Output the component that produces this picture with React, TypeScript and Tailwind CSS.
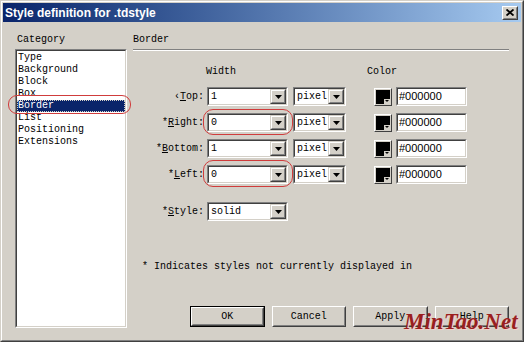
import React from 'react';

const mono = "font-['Liberation_Mono','Courier_New',monospace] text-[10px] leading-[12px] text-black";

// Botón de flecha de los combos
const DropBtn = () => (
  <div className="flex w-[16px] h-full border border-t-[#d4d0c8] border-l-[#d4d0c8] border-b-[#404040] border-r-[#404040]">
    <div className="flex flex-1 items-center justify-center bg-[#d4d0c8] border border-t-white border-l-white border-b-[#808080] border-r-[#808080]">
      <svg width="7" height="4" viewBox="0 0 7 4">
        <path d="M0 0h7L3.5 4z" fill="#000" />
      </svg>
    </div>
  </div>
);

const Sunken: React.FC<{ className?: string; children?: React.ReactNode }> = ({ className = '', children }) => (
  <div className={`flex border border-t-[#808080] border-l-[#808080] border-b-white border-r-white ${className}`}>
    <div className="flex flex-1 min-w-0 bg-white border border-t-[#404040] border-l-[#404040] border-b-[#d4d0c8] border-r-[#d4d0c8]">
      {children}
    </div>
  </div>
);

const Combo: React.FC<{ value: string; className: string }> = ({ value, className }) => (
  <Sunken className={`h-[19px] ${className}`}>
    <span className={`flex-1 flex items-center pl-[2px] ${mono}`}>{value}</span>
    <DropBtn />
  </Sunken>
);

const Swatch = () => (
  <div className="w-[18px] h-[18px] p-[1px] bg-[#d4d0c8] border border-t-white border-l-white border-b-[#404040] border-r-[#404040]">
    <div className="relative w-full h-full bg-black">
      <div className="absolute right-0 bottom-0 w-[6px] h-[5px] bg-[#d4d0c8] flex items-center justify-center">
        <svg width="4" height="2" viewBox="0 0 4 2">
          <path d="M0 0h4L2 2z" fill="#000" />
        </svg>
      </div>
    </div>
  </div>
);

const BorderRow: React.FC<{ pre: string; acc: string; rest: string; value: string }> = ({ pre, acc, rest, value }) => (
  <div className="flex items-center h-[19px]">
    <span className={`w-[71px] text-right ${mono}`}>
      {pre}
      <u className="underline-offset-1">{acc}</u>
      {rest}:
    </span>
    <Combo value={value} className="ml-[3px] w-[81px]" />
    <Combo value="pixel" className="ml-[5px] w-[53px]" />
    <div className="ml-[28px]">
      <Swatch />
    </div>
    <Sunken className="ml-[4px] w-[71px] h-[19px]">
      <span className="flex items-center pl-[1px] font-['Liberation_Sans',Arial,sans-serif] text-[11px] text-black">#000000</span>
    </Sunken>
  </div>
);

const Btn: React.FC<{ label: string; isDefault?: boolean }> = ({ label, isDefault }) => (
  <div className={`w-[75px] h-[21px] flex ${isDefault ? 'border border-black' : ''}`}>
    <div className="flex flex-1 border border-t-white border-l-white border-b-[#404040] border-r-[#404040]">
      <div className={`flex flex-1 items-center justify-center bg-[#d4d0c8] border border-t-[#d4d0c8] border-l-[#d4d0c8] border-b-[#808080] border-r-[#808080] ${mono}`}>
        {label}
      </div>
    </div>
  </div>
);

const categories = ['Type', 'Background', 'Block', 'Box', 'Border', 'List', 'Positioning', 'Extensions'];

export default function App() {
  return (
    <div className="relative w-[524px] h-[342px] overflow-hidden bg-[#d4d0c8]">
      <div className="flex w-full h-full border border-t-[#d4d0c8] border-l-[#d4d0c8] border-b-[#404040] border-r-[#404040]">
        <div className="flex flex-col flex-1 p-[1px] border border-t-white border-l-white border-b-[#808080] border-r-[#808080]">
          {/* Title bar */}
          <div className="flex items-center h-[19px] pl-[2px] pr-[3px] bg-linear-to-r from-[#0a246a] to-[#a6caf0]">
            <span className="flex-1 font-['Liberation_Sans',Arial,sans-serif] font-bold text-[12px] text-white">
              Style definition for .tdstyle
            </span>
            <div className="flex w-[16px] h-[14px] border border-t-white border-l-white border-b-[#404040] border-r-[#404040] bg-[#d4d0c8]">
              <div className="flex flex-1 items-center justify-center border border-t-[#d4d0c8] border-l-[#d4d0c8] border-b-[#808080] border-r-[#808080]">
                <svg width="8" height="7" viewBox="0 0 8 7">
                  <path d="M0.5 0.5L7.5 6.5M7.5 0.5L0.5 6.5" stroke="#000" strokeWidth="1.8" />
                </svg>
              </div>
            </div>
          </div>

          {/* Body */}
          <div className="flex flex-1 pt-[12px] pl-[12px]">
            {/* Category column */}
            <div className="flex flex-col w-[112px]">
              <span className={`pl-[2px] ${mono}`}>Category</span>
              <div className="mt-[3px] h-[279px] flex border border-t-[#808080] border-l-[#808080] border-b-white border-r-white">
                <div className="flex flex-col flex-1 bg-white pt-[1px] border border-t-[#404040] border-l-[#404040] border-b-[#d4d0c8] border-r-[#d4d0c8]">
                  {categories.map(c => (
                    <div
                      key={c}
                      className={`h-[12px] pl-[1px] ${mono} ${
                        c === 'Border'
                          ? 'bg-[#0a246a] !text-white outline-1 outline-dotted outline-[#d4d0c8] -outline-offset-1'
                          : ''
                      }`}
                    >
                      {c}
                    </div>
                  ))}
                </div>
              </div>
            </div>

            {/* Border panel */}
            <div className="flex flex-col ml-[6px] w-[376px]">
              <span className={mono}>Border</span>
              <div className="mt-[3px] h-[2px] border-t border-t-[#808080] border-b border-b-white" />

              <div className="flex mt-[15px]">
                <span className={`ml-[73px] ${mono}`}>Width</span>
                <span className={`ml-[131px] ${mono}`}>Color</span>
              </div>

              <div className="flex flex-col gap-[7px] mt-[9px]">
                <BorderRow pre="‹" acc="T" rest="op" value="1" />
                <BorderRow pre="*" acc="R" rest="ight" value="0" />
                <BorderRow pre="*" acc="B" rest="ottom" value="1" />
                <BorderRow pre="*" acc="L" rest="eft" value="0" />
              </div>

              <div className="flex items-center mt-[18px]">
                <span className={`w-[71px] text-right ${mono}`}>
                  *<u className="underline-offset-1">S</u>tyle:
                </span>
                <Combo value="solid" className="ml-[3px] w-[81px]" />
              </div>

              <span className={`mt-[40px] ml-[9px] ${mono}`}>* Indicates styles not currently displayed in</span>

              <div className="flex mt-[33px] ml-[57px] gap-[7px]">
                <Btn label="OK" isDefault />
                <Btn label="Cancel" />
                <Btn label="Apply" />
                <Btn label="Help" />
              </div>
            </div>
          </div>
        </div>
      </div>

      {/* Red annotation marks */}
      <div className="absolute left-[8px] top-[95px] w-[123px] h-[19px] rounded-[9px] border border-[#d03c3c]" />
      <div className="absolute left-[203px] top-[109px] w-[90px] h-[26px] rounded-[10px] border border-[#d03c3c]" />
      <div className="absolute left-[203px] top-[160px] w-[90px] h-[27px] rounded-[10px] border border-[#d03c3c]" />

      {/* Watermark */}
      <span className="absolute left-[404px] top-[309px] font-['Liberation_Serif','Times_New_Roman',serif] font-bold italic text-[23px] leading-[26px] text-[#9a1f1f] [text-shadow:1px_1px_0_#f4d0c8]">
        MinTao.Net
      </span>
    </div>
  );
}
